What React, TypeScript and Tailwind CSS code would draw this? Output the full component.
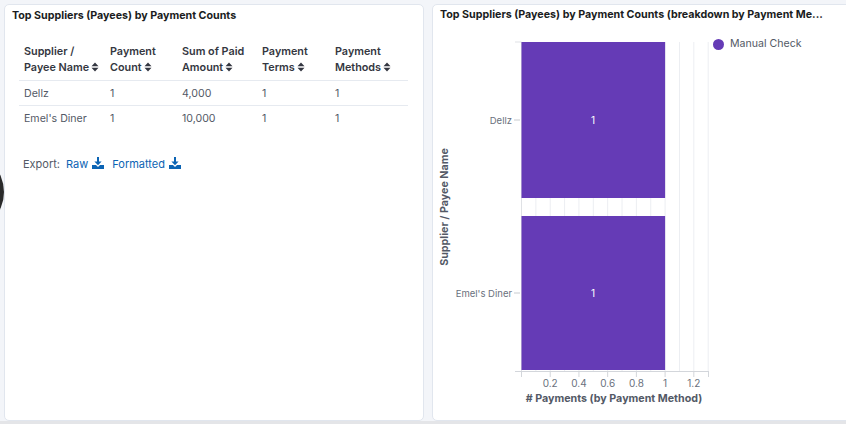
import React from 'react';

const font = { fontFamily: 'Inter, "Liberation Sans", sans-serif' };

const rows = [
  { name: 'Dellz', count: '1', sum: '4,000', terms: '1', methods: '1' },
  { name: "Emel's Diner", count: '1', sum: '10,000', terms: '1', methods: '1' },
];

function SortIcon() {
  return (
    <svg width="8" height="10" viewBox="0 0 8 10" className="inline-block ml-[2px] -mt-[2px]" fill="currentColor">
      <path d="M4 0.5 L7.5 4.2 H0.5Z M4 9.5 L7.5 5.8 H0.5Z" />
    </svg>
  );
}

function DownloadIcon() {
  return (
    <svg width="12" height="12" viewBox="0 0 12 12" className="inline-block ml-[4px] -mt-[3px]" fill="currentColor">
      <path d="M5 0 H7 V4.5 H9.6 L6 8.2 L2.4 4.5 H5Z" />
      <path d="M0 8 H4 L6 10 L8 8 H12 V12 H0Z" />
    </svg>
  );
}

function Chart() {
  const x0 = 520.5;
  const unit = 143.6;
  const grid = Array.from({ length: 13 }, (_, i) => x0 + (i + 1) * unit * 0.1);
  const ticks = [0.2, 0.4, 0.6, 0.8, 1, 1.2];
  return (
    <svg width="280" height="386" viewBox="432 31 280 386" style={font}>
      {grid.map((gx, i) => (
        <line key={i} x1={gx} x2={gx} y1="42" y2="371" stroke="#eceef2" strokeWidth="1" />
      ))}
      <line x1="514" x2="520.5" y1="42" y2="42" stroke="#dfe1e5" />
      <line x1={x0} x2={x0} y1="42" y2="371" stroke="#dfe1e5" />
      <rect x={x0} y="42" width={unit} height="156" fill="#653bb6" />
      <rect x={x0} y="216" width={unit} height="154" fill="#653bb6" />
      <text x="592" y="124" fontSize="10" fill="#fff" textAnchor="middle">1</text>
      <text x="592" y="297" fontSize="10" fill="#fff" textAnchor="middle">1</text>
      <line x1="513" x2="519" y1="120" y2="120" stroke="#c8cbd0" />
      <line x1="513" x2="519" y1="293" y2="293" stroke="#c8cbd0" />
      <text x="511" y="123.5" fontSize="9.5" fill="#6a717d" textAnchor="end">Dellz</text>
      <text x="511" y="296.5" fontSize="9.5" fill="#6a717d" textAnchor="end">Emel's Diner</text>
      <line x1="514" x2="708" y1="371.5" y2="371.5" stroke="#d3d6db" />
      <line x1={x0} x2={x0} y1="371" y2="377" stroke="#d3d6db" />
      <line x1="707.5" x2="707.5" y1="371" y2="377" stroke="#d3d6db" />
      {ticks.map((t) => (
        <g key={t}>
          <line x1={x0 + t * unit} x2={x0 + t * unit} y1="371" y2="377" stroke="#d3d6db" />
          <text x={x0 + t * unit} y="387" fontSize="10" fill="#6a717d" textAnchor="middle">{t}</text>
        </g>
      ))}
      <text x="613" y="402" fontSize="10.7" fontWeight="700" fill="#535966" textAnchor="middle">
        # Payments (by Payment Method)
      </text>
      <text
        x="447"
        y="207"
        fontSize="10.7"
        fontWeight="700"
        fill="#535966"
        textAnchor="middle"
        transform="rotate(-90 447 207)"
      >
        Supplier / Payee Name
      </text>
    </svg>
  );
}

export default function App() {
  return (
    <div className="w-[846px] h-[424px] overflow-hidden relative flex flex-col bg-[#f3f5f9]" style={font}>
      <div className="flex gap-[8px] pt-[4px] pl-[4px] h-[421px]">
        {/* table panel */}
        <div className="w-[420px] h-[417px] shrink-0 bg-white border border-[#e1e6ee] rounded-[5px]">
          <div className="pl-[7px] pt-[4px] text-[10.7px] leading-[14px] font-bold text-[#1a1c21]">
            Top Suppliers (Payees) by Payment Counts
          </div>
          <table className="ml-[14px] mt-[18px] w-[389px] table-fixed border-collapse">
            <colgroup>
              <col className="w-[86px]" />
              <col className="w-[72px]" />
              <col className="w-[80px]" />
              <col className="w-[73px]" />
              <col className="w-[78px]" />
            </colgroup>
            <thead>
              <tr className="border-b border-[#e6eaf0] text-left text-[#343741] text-[10.8px]">
                <th className="pl-[5px] pt-[3px] pb-[5px] font-semibold leading-[15.5px] align-top">
                  Supplier /<br />Payee Name<SortIcon />
                </th>
                <th className="pl-[5px] pt-[3px] pb-[5px] font-semibold leading-[15.5px] align-top">
                  Payment<br />Count<SortIcon />
                </th>
                <th className="pl-[5px] pt-[3px] pb-[5px] font-semibold leading-[15.5px] align-top">
                  Sum of Paid<br />Amount<SortIcon />
                </th>
                <th className="pl-[5px] pt-[3px] pb-[5px] font-semibold leading-[15.5px] align-top">
                  Payment<br />Terms<SortIcon />
                </th>
                <th className="pl-[5px] pt-[3px] pb-[5px] font-semibold leading-[15.5px] align-top">
                  Payment<br />Methods<SortIcon />
                </th>
              </tr>
            </thead>
            <tbody className="text-[#535966] text-[10.6px]">
              {rows.map((r, i) => (
                <tr key={r.name} className={i === 0 ? 'border-b border-[#e6eaf0]' : ''}>
                  <td className="pl-[5px] h-[25px] leading-[15px]">{r.name}</td>
                  <td className="pl-[5px] h-[25px] leading-[15px]">{r.count}</td>
                  <td className="pl-[5px] h-[25px] leading-[15px]">{r.sum}</td>
                  <td className="pl-[5px] h-[25px] leading-[15px]">{r.terms}</td>
                  <td className="pl-[5px] h-[25px] leading-[15px]">{r.methods}</td>
                </tr>
              ))}
            </tbody>
          </table>
          <div className="ml-[18px] mt-[25px] flex items-center text-[11px] leading-[16px]">
            <span className="text-[#535966]">Export:</span>
            <span className="ml-[6px] text-[#0b64b4]">
              Raw
              <DownloadIcon />
            </span>
            <span className="ml-[8px] text-[#0b64b4]">
              Formatted
              <DownloadIcon />
            </span>
          </div>
        </div>

        {/* chart panel */}
        <div className="w-[440px] h-[417px] shrink-0 bg-white border border-[#e1e6ee] rounded-[5px]">
          <div className="pl-[7px] pt-[3px] text-[10.7px] leading-[14px] font-bold text-[#1a1c21] whitespace-nowrap">
            Top Suppliers (Payees) by Payment Counts (breakdown by Payment Me...
          </div>
          <div className="flex mt-[9px]">
            <Chart />
            <div className="flex items-center h-[14px] mt-[6px] text-[10.6px] text-[#535966]">
              <span className="w-[11px] h-[11px] rounded-full bg-[#653bb6] mr-[6px]" />
              Manual Check
            </div>
          </div>
        </div>
      </div>
      <div className="h-[3px] bg-[#e4e5e8]" />
      <div className="absolute left-[-76px] top-[152px] w-[80px] h-[80px] rounded-full bg-[#2a2a2a]" />
    </div>
  );
}
